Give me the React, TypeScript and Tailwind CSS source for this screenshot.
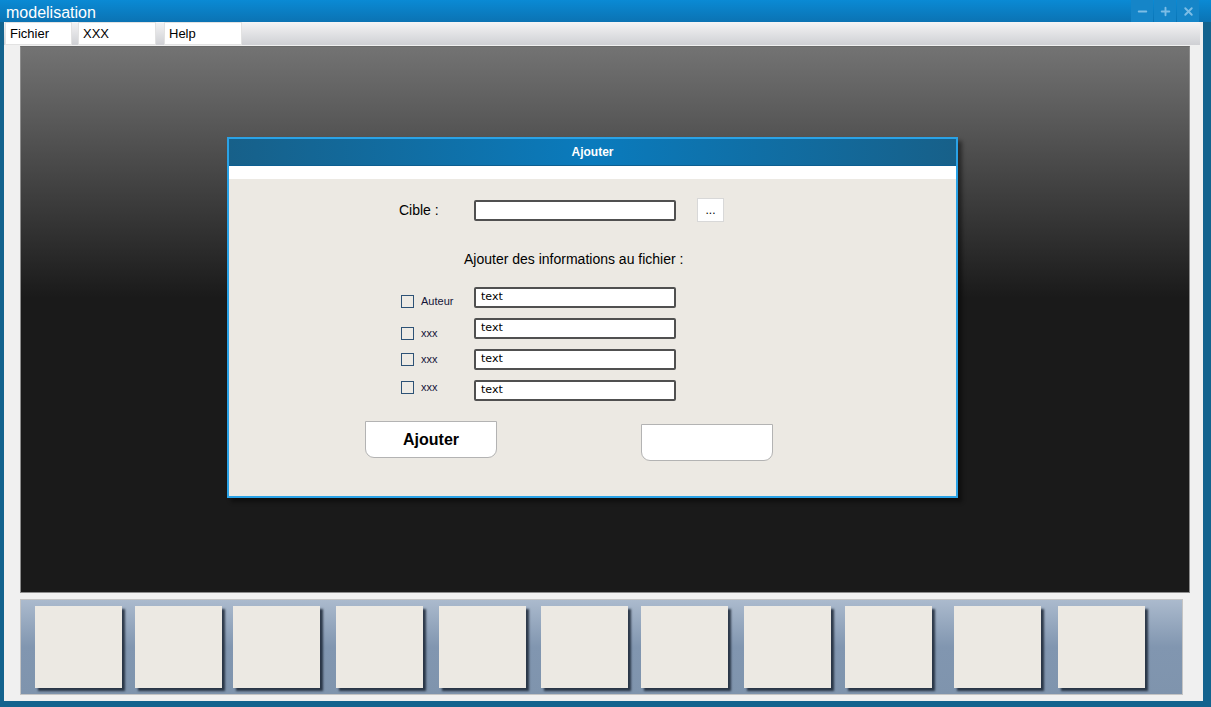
import { Minus, Plus, X } from "lucide-react";

const rows = [
  { label: "Auteur", box: "mt-[8px]" },
  { label: "xxx", box: "mt-[9px]" },
  { label: "xxx", box: "mt-[4px]" },
  { label: "xxx", box: "mt-[1px]" },
];

// espacement irrégulier des vignettes, comme sur la maquette
const tiles = [
  "ml-[14px]",
  "ml-[13px]",
  "ml-[11px]",
  "ml-[16px]",
  "ml-[16px]",
  "ml-[15px]",
  "ml-[13px]",
  "ml-[16px]",
  "ml-[14px]",
  "ml-[22px]",
  "ml-[17px]",
];

const TitleBar = () => (
  <div className="h-[22px] flex items-center bg-[linear-gradient(to_bottom,#0a8ad4,#0b73b3)] pl-[6px]">
    <span className="text-white text-[16px] leading-none pt-[3px]">modelisation</span>
    <div className="ml-auto mr-[12px] flex h-full">
      {[Minus, Plus, X].map((Icon, i) => (
        <div
          key={i}
          className="w-[22px] h-full ml-[1px] bg-[#1585c8] flex items-center justify-center"
        >
          <Icon size={13} strokeWidth={3.5} className="text-[#7cbde6]" />
        </div>
      ))}
    </div>
  </div>
);

const MenuBar = () => (
  <div className="h-[23px] w-[1196px] flex bg-[linear-gradient(to_bottom,#f4f4f5,#cfd0d4)]">
    <div className="ml-[1px] w-[67px] h-full bg-white border border-[#e2e2e2] px-[4px] text-[13px] leading-[21px]">
      Fichier
    </div>
    <div className="ml-[6px] w-[78px] h-full bg-white border border-[#e2e2e2] px-[4px] text-[13px] leading-[21px]">
      XXX
    </div>
    <div className="ml-[8px] w-[78px] h-full bg-white border border-[#e2e2e2] px-[4px] text-[13px] leading-[21px]">
      Help
    </div>
  </div>
);

const TextBox = ({ value }: { value?: string }) => (
  <div className="w-[202px] h-[21px] bg-white border-2 border-[#505050] rounded-[2px] pl-[5px] pt-[1px] text-[11px] leading-[14px] font-['DejaVu_Sans',sans-serif] text-black">
    {value}
  </div>
);

const Dialog = () => (
  <div className="ml-[206px] mt-[90px] w-[731px] border-2 border-[#2aa2e6] shadow-[4px_4px_4px_rgba(0,0,0,0.45)]">
    <div className="h-[27px] flex items-center justify-center bg-[linear-gradient(to_right,#176089,#0a7bbd_50%,#176089)] border-b border-[#0d5f91]">
      <span className="text-white font-bold text-[12px]">Ajouter</span>
    </div>
    <div className="h-[13px] bg-white" />
    <div className="h-[317px] bg-[#ece9e3] pt-[19px] text-[14px] text-black">
      <div className="flex items-center">
        <span className="ml-[170px] w-[75px]">Cible :</span>
        <TextBox />
        <div className="ml-[21px] w-[27px] h-[24px] bg-white border border-[#d8d8d8] text-[12px] flex items-center justify-center">
          ...
        </div>
      </div>
      <div className="ml-[235px] mt-[28px] leading-[18px]">
        Ajouter des informations au fichier :
      </div>
      <div className="mt-[19px] flex flex-col gap-[10px]">
        {rows.map((row, i) => (
          <div key={i} className="flex">
            <div className={`ml-[172px] w-[73px] flex items-center ${row.box} h-[12px]`}>
              <div className="w-[13px] h-[13px] border border-[#2d5276] bg-[#eeebe5]" />
              <span className="ml-[7px] text-[11px] text-[#141438]">{row.label}</span>
            </div>
            <TextBox value="text" />
          </div>
        ))}
      </div>
      <div className="mt-[20px] flex items-start">
        <div className="ml-[136px] w-[132px] h-[37px] bg-white border border-[#b3b3b3] rounded-b-[9px] flex items-center justify-center font-bold text-[16px]">
          Ajouter
        </div>
        <div className="ml-[144px] mt-[3px] w-[132px] h-[37px] bg-white border border-[#b3b3b3] rounded-b-[9px]" />
      </div>
    </div>
  </div>
);

export default function App() {
  return (
    <div className="w-[1211px] h-[707px] flex flex-col bg-[#13638e] font-['Liberation_Sans',Arial,sans-serif] overflow-hidden">
      <TitleBar />
      <div className="flex-1 ml-[4px] mr-[8px] mb-[6px] bg-[#f0f0f0] flex flex-col">
        <MenuBar />
        <div className="ml-[16px] mt-[1px] w-[1170px] h-[547px] border border-[#8c8c8c] border-t-[#6a6a6a] bg-[linear-gradient(to_bottom,#737373,#1a1a1a_46%,#1a1a1a)] overflow-hidden">
          <Dialog />
        </div>
        <div className="ml-[16px] mt-[6px] w-[1163px] h-[96px] border border-[#c4c4c4] bg-[linear-gradient(to_bottom,#abbacd,#8196b0_50%,#7f94ad)] flex items-start pt-[6px]">
          {tiles.map((cls, i) => (
            <div
              key={i}
              className={`${cls} w-[87px] h-[82px] bg-[#ece9e3] shadow-[3px_3px_2px_rgba(20,30,45,0.8)] shrink-0`}
            />
          ))}
        </div>
      </div>
    </div>
  );
}
